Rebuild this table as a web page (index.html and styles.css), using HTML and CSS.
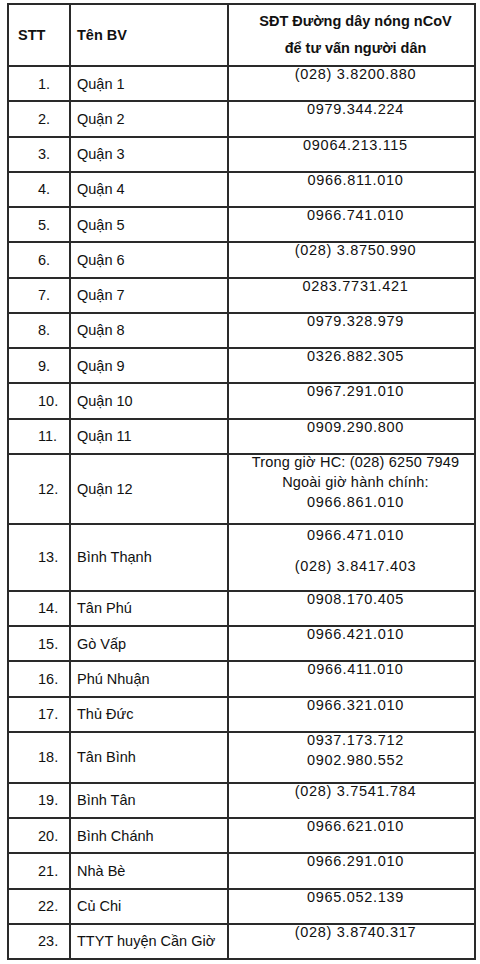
FILE: index.html
```html
<!DOCTYPE html>
<html lang="vi">
<head>
<meta charset="utf-8">
<title>Đường dây nóng nCoV</title>
<link rel="stylesheet" href="styles.css">
</head>
<body>
<table class="tbl">
  <colgroup>
    <col class="c-stt">
    <col class="c-name">
    <col class="c-phone">
  </colgroup>
  <thead>
    <tr class="head">
      <th class="cell h-stt">STT</th>
      <th class="cell h-name">Tên BV</th>
      <th class="cell h-phone">SĐT Đường dây nóng nCoV<br>để tư vấn người dân</th>
    </tr>
  </thead>
  <tbody>
    <tr class="r"><td class="cell stt">1.</td><td class="cell name">Quận 1</td><td class="cell phone"><div class="ph">(028) 3.8200.880</div></td></tr>
    <tr class="r"><td class="cell stt">2.</td><td class="cell name">Quận 2</td><td class="cell phone"><div class="ph">0979.344.224</div></td></tr>
    <tr class="r"><td class="cell stt">3.</td><td class="cell name">Quận 3</td><td class="cell phone"><div class="ph">09064.213.115</div></td></tr>
    <tr class="r"><td class="cell stt">4.</td><td class="cell name">Quận 4</td><td class="cell phone"><div class="ph">0966.811.010</div></td></tr>
    <tr class="r"><td class="cell stt">5.</td><td class="cell name">Quận 5</td><td class="cell phone"><div class="ph">0966.741.010</div></td></tr>
    <tr class="r"><td class="cell stt">6.</td><td class="cell name">Quận 6</td><td class="cell phone"><div class="ph">(028) 3.8750.990</div></td></tr>
    <tr class="r"><td class="cell stt">7.</td><td class="cell name">Quận 7</td><td class="cell phone"><div class="ph">0283.7731.421</div></td></tr>
    <tr class="r"><td class="cell stt">8.</td><td class="cell name">Quận 8</td><td class="cell phone"><div class="ph">0979.328.979</div></td></tr>
    <tr class="r"><td class="cell stt">9.</td><td class="cell name">Quận 9</td><td class="cell phone"><div class="ph">0326.882.305</div></td></tr>
    <tr class="r"><td class="cell stt">10.</td><td class="cell name">Quận 10</td><td class="cell phone"><div class="ph">0967.291.010</div></td></tr>
    <tr class="r"><td class="cell stt">11.</td><td class="cell name">Quận 11</td><td class="cell phone"><div class="ph">0909.290.800</div></td></tr>
    <tr class="r12"><td class="cell stt">12.</td><td class="cell name">Quận 12</td><td class="cell phone"><div class="ph"><span class="txt">Trong giờ HC: (028) 6250 7949</span><br><span class="txt">Ngoài giờ hành chính:</span><br>0966.861.010</div></td></tr>
    <tr class="r13"><td class="cell stt">13.</td><td class="cell name">Bình Thạnh</td><td class="cell phone"><div class="ph ph-gap"><p class="pl">0966.471.010</p><p class="pl">(028) 3.8417.403</p></div></td></tr>
    <tr class="r"><td class="cell stt">14.</td><td class="cell name">Tân Phú</td><td class="cell phone"><div class="ph">0908.170.405</div></td></tr>
    <tr class="r"><td class="cell stt">15.</td><td class="cell name">Gò Vấp</td><td class="cell phone"><div class="ph">0966.421.010</div></td></tr>
    <tr class="r"><td class="cell stt">16.</td><td class="cell name">Phú Nhuận</td><td class="cell phone"><div class="ph">0966.411.010</div></td></tr>
    <tr class="r"><td class="cell stt">17.</td><td class="cell name">Thủ Đức</td><td class="cell phone"><div class="ph">0966.321.010</div></td></tr>
    <tr class="r18"><td class="cell stt">18.</td><td class="cell name">Tân Bình</td><td class="cell phone"><div class="ph">0937.173.712<br>0902.980.552</div></td></tr>
    <tr class="r"><td class="cell stt">19.</td><td class="cell name">Bình Tân</td><td class="cell phone"><div class="ph">(028) 3.7541.784</div></td></tr>
    <tr class="r"><td class="cell stt">20.</td><td class="cell name">Bình Chánh</td><td class="cell phone"><div class="ph">0966.621.010</div></td></tr>
    <tr class="r"><td class="cell stt">21.</td><td class="cell name">Nhà Bè</td><td class="cell phone"><div class="ph">0966.291.010</div></td></tr>
    <tr class="r"><td class="cell stt">22.</td><td class="cell name">Củ Chi</td><td class="cell phone"><div class="ph">0965.052.139</div></td></tr>
    <tr class="r"><td class="cell stt">23.</td><td class="cell name">TTYT huyện Cần Giờ</td><td class="cell phone"><div class="ph">(028) 3.8740.317</div></td></tr>
  </tbody>
</table>
</body>
</html>
```

FILE: styles.css
```css
html, body {
  margin: 0;
  padding: 0;
  background: #ffffff;
}

body {
  padding: 3px 0 0 7px;
  font-family: "Liberation Sans", Arial, sans-serif;
  font-size: 14.5px;
  color: #111111;
}

.tbl {
  border-collapse: collapse;
  table-layout: fixed;
  width: 467px;
}

.c-stt { width: 62px; }
.c-name { width: 158px; }
.c-phone { width: 247px; }

.cell {
  border: 2px solid #2a2a2a;
  padding: 0;
  line-height: 20px;
  text-align: left;
  vertical-align: middle;
}

.head { height: 62px; }

.h-stt,
.h-name,
.h-phone {
  font-weight: bold;
}

.cell.h-stt { padding-left: 9px; }

.cell.h-name { padding-left: 6px; }

.cell.h-phone {
  text-align: center;
  line-height: 27px;
  padding-left: 8px;
}

.r { height: 35.25px; }
.r12 { height: 70px; }
.r13 { height: 67px; }
.r18 { height: 51px; }

.cell.stt { padding-left: 29px; }

.cell.name {
  padding-left: 6px;
  white-space: nowrap;
}

.cell.phone {
  vertical-align: top;
  text-align: center;
  padding-left: 8px;
}

.ph {
  margin-top: -3px;
  letter-spacing: 0.7px;
}

.ph .txt { letter-spacing: 0.2px; }

.ph.ph-gap { margin-top: 0; }

.pl {
  margin: 0 0 11px 0;
}
```
